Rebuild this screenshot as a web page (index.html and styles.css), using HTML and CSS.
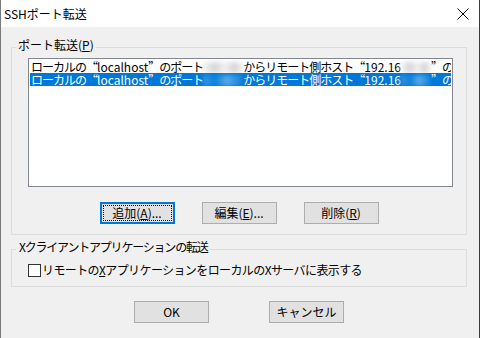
FILE: index.html
```html
<!DOCTYPE html>
<html lang="ja">
<head>
<meta charset="utf-8">
<link rel="stylesheet" href="styles.css">
</head>
<body>
<div class="window">
  <div class="titlebar">
    <span class="title">SSHポート転送</span>
    <svg class="close" width="12" height="12" viewBox="0 0 12 12"><path d="M0.5 0.5 L11.5 11.5 M11.5 0.5 L0.5 11.5" stroke="#000" stroke-width="1" fill="none"/></svg>
  </div>
  <div class="client">
    <div class="group group-ports">
      <div class="group-label">ポート転送(<u>P</u>)</div>
      <div class="listbox">
        <div class="row">ローカルの<span class="q">“</span><span class="lat">localhost</span><span class="q">”</span>のポート<span class="blur b1"></span>からリモート側ホスト<span class="q">“</span><span class="lat">192.16</span><span class="blur b2"></span><span class="q">”</span>のホスト</div>
        <div class="row selected">ローカルの<span class="q">“</span><span class="lat">localhost</span><span class="q">”</span>のポート<span class="blur b1"></span>からリモート側ホスト<span class="q">“</span><span class="lat">192.16</span><span class="blur b2"></span><span class="q">”</span>のホスト</div>
      </div>
      <div class="button-row">
        <div class="button default"><span class="focus">追加(<u>A</u>)...</span></div>
        <div class="button"><span>編集(<u>E</u>)...</span></div>
        <div class="button"><span>削除(<u>R</u>)</span></div>
      </div>
    </div>
    <div class="group group-x">
      <div class="group-label narrow">Xクライアントアプリケーションの転送</div>
      <div class="check-row">
        <span class="checkbox"></span>
        <span class="check-text">リモートの<u>X</u>アプリケーションをローカルのXサーバに表示する</span>
      </div>
    </div>
    <div class="button-row bottom">
      <div class="button"><span>OK</span></div>
      <div class="button"><span>キャンセル</span></div>
    </div>
  </div>
</div>
</body>
</html>
```
FILE: styles.css
```css
* { box-sizing: border-box; }
html, body { margin: 0; padding: 0; }
body {
  width: 480px;
  height: 338px;
  overflow: hidden;
  font-family: "Noto Sans CJK JP", "Liberation Sans", sans-serif;
  font-size: 12px;
  color: #000;
}
u { text-decoration: underline; text-underline-offset: 1px; }

.window {
  width: 480px;
  height: 338px;
  background: #f0f0f0;
  border-left: 1px solid #7a7a7a;
  border-right: 1px solid #3a3a3a;
  display: flex;
  flex-direction: column;
}
.titlebar {
  height: 27px;
  background: #fff;
  display: flex;
  align-items: center;
  justify-content: space-between;
  padding: 0 10px 0 3px;
}
.title { font-size: 12px; line-height: 14px; }
.close { display: block; margin-top: 1px; }

.client {
  padding: 0 12px 0 10px;
}
.group {
  border: 1px solid #dcdcdc;
}
.group-ports { margin-top: 20px; }
.group-x { margin-top: 14px; }
.group-label {
  width: fit-content;
  margin: -10px 0 0 4px;
  padding: 0 2px;
  background: #f0f0f0;
  line-height: 13px;
  height: 13px;
  white-space: nowrap;
}
.group-label.narrow { letter-spacing: -1.2px; padding-left: 3px; }

.listbox {
  margin: 7px 0 0 16px;
  width: 425px;
  height: 129px;
  background: #fff;
  border: 1px solid #828790;
  padding: 1px;
  overflow: hidden;
}
.row {
  height: 13px;
  line-height: 13px;
  padding-left: 1px;
  white-space: nowrap;
  overflow: hidden;
  letter-spacing: -1px;
}
.row .lat { letter-spacing: 0; }
.row .q { font-feature-settings: "fwid"; }
.row.selected { background: #0078d7; color: #fff; }
.blur {
  display: inline-block;
  height: 11px;
  vertical-align: -1px;
  filter: blur(2px);
  background: linear-gradient(90deg, #f4f4f4, #d6d6d6 30%, #f2f2f2 55%, #d4d4d4 80%, #f6f6f6);
}
.b1 { width: 40px; }
.b2 { width: 30px; }
.selected .blur {
  background: linear-gradient(90deg, #3a98e4, #0b7fd9 30%, #5aaaea 60%, #0e80d9);
}

.button-row {
  display: flex;
  justify-content: center;
  gap: 27px;
  margin-top: 15px;
  padding-bottom: 10px;
}
.button {
  width: 75px;
  height: 22px;
  background: #e1e1e1;
  border: 1px solid #adadad;
  display: flex;
  align-items: center;
  justify-content: center;
  line-height: 14px;
}
.button.default {
  border: 2px solid #0078d7;
  padding: 1px;
}
.button .focus {
  flex: 1;
  align-self: stretch;
  display: flex;
  align-items: center;
  justify-content: center;
  border: 1px dotted #000;
}

.check-row {
  display: flex;
  align-items: center;
  margin: 10px 0 0 16px;
  padding-bottom: 9px;
}
.checkbox {
  width: 13px;
  height: 13px;
  border: 1px solid #333;
  background: #fff;
  margin-right: 1px;
}
.check-text { line-height: 14px; white-space: nowrap; letter-spacing: -0.6px; }

.button-row.bottom {
  gap: 60px;
  margin-top: 14px;
  padding-bottom: 0;
}
```
